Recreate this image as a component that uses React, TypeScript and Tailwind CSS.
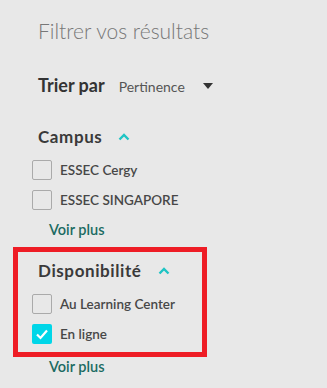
import React from 'react';

const ChevronUp = () => (
  <svg width="12" height="8" viewBox="0 0 12 8" fill="none">
    <path d="M1.5 6.5L6 2L10.5 6.5" stroke="#1fc4c4" strokeWidth="2.4" />
  </svg>
);

const Checkbox = ({ checked }: { checked?: boolean }) =>
  checked ? (
    <span className="flex h-[20px] w-[20px] items-center justify-center rounded-[2px] bg-[#00d6e8]">
      <svg width="14" height="12" viewBox="0 0 14 12" fill="none">
        <path d="M2 6.5L5.5 10L12 2.5" stroke="#fff" strokeWidth="2.2" />
      </svg>
    </span>
  ) : (
    <span className="h-[20px] w-[20px] rounded-[2px] border-[1.5px] border-[#aaaaaa]" />
  );

const Option = ({ label, checked }: { label: string; checked?: boolean }) => (
  <div className="flex h-[20px] items-center gap-[8px]">
    <Checkbox checked={checked} />
    <span className="text-[13.5px] font-semibold text-[#474747]">{label}</span>
  </div>
);

const SectionHeader = ({ title }: { title: string }) => (
  <div className="flex h-[28px] items-center gap-[16px] pl-[6px]">
    <span className="text-[17px] font-bold tracking-[0.6px] text-[#3a3a3a]">{title}</span>
    <ChevronUp />
  </div>
);

const App: React.FC = () => {
  return (
    <div className="h-[388px] w-full bg-[#e8e8e8] pl-[32px] font-['Lato',sans-serif]">
      {/* Title */}
      <div className="box-content flex h-[28px] items-center pl-[6px] pt-[17px] text-[21px] font-light text-[#777777]">
        Filtrer vos résultats
      </div>

      {/* Sort */}
      <div className="mt-[26px] flex h-[28px] items-center pl-[6px]">
        <span className="text-[18px] font-bold text-[#333333]">Trier par</span>
        <span className="ml-[14px] mt-[3px] text-[14px] text-[#555555]">Pertinence</span>
        <svg className="ml-[18px] mt-[1px]" width="10" height="6" viewBox="0 0 10 6">
          <path d="M0 0H10L5 6Z" fill="#333333" />
        </svg>
      </div>

      {/* Campus */}
      <div className="mt-[24px]">
        <SectionHeader title="Campus" />
        <div className="mt-[9px] flex flex-col gap-[10px]">
          <Option label="ESSEC Cergy" />
          <Option label="ESSEC SINGAPORE" />
        </div>
        <div className="mt-[10px] flex h-[20px] items-center pl-[17px] text-[14.5px] font-semibold text-[#1b6b62]">
          Voir plus
        </div>
      </div>

      {/* Disponibilité */}
      <div className="ml-[-19px] mt-[7px] w-[194px] border-[5px] border-[#ee1c25] pb-[8px] pl-[14px]">
        <div className="mt-[5px]">
          <SectionHeader title="Disponibilité" />
        </div>
        <div className="mt-[9px] flex flex-col gap-[10px]">
          <Option label="Au Learning Center" />
          <Option label="En ligne" checked />
        </div>
      </div>
      <div className="flex h-[20px] items-center pl-[17px] text-[14.5px] font-semibold text-[#1b6b62]">
        Voir plus
      </div>
    </div>
  );
};

export default App;
